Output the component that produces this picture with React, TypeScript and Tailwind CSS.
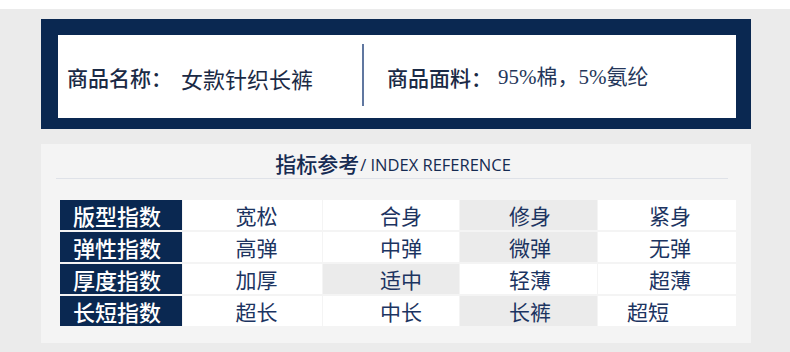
import React from "react";

const CJK = "'Noto Sans CJK SC', 'Noto Sans', sans-serif";

type Cell = { t: string; hi?: boolean; left?: boolean };

const rows: { label: string; cells: Cell[] }[] = [
  { label: "版型指数", cells: [{ t: "宽松" }, { t: "合身" }, { t: "修身", hi: true }, { t: "紧身" }] },
  { label: "弹性指数", cells: [{ t: "高弹" }, { t: "中弹" }, { t: "微弹", hi: true }, { t: "无弹" }] },
  { label: "厚度指数", cells: [{ t: "加厚" }, { t: "适中", hi: true }, { t: "轻薄" }, { t: "超薄" }] },
  { label: "长短指数", cells: [{ t: "超长" }, { t: "中长" }, { t: "长裤", hi: true }, { t: "超短", left: true }] },
];

const colPad = ["pl-[8px]", "pl-[20px]", "pl-[3px]", "pl-[6px]"];

export default function App() {
  return (
    <div
      className="w-[790px] h-[352px] bg-[#ebebeb] overflow-hidden"
      style={{ fontFamily: CJK }}
    >
      <div className="h-[9px] bg-white" />
      {/* product info box */}
      <div className="ml-[41px] mt-[10px] w-[710px] bg-[#0a2851] pt-[16px] pl-[17px] pr-[15px] pb-[11px]">
        <div className="h-[83px] bg-white flex items-start">
          <div className="w-[304px] h-full flex items-center pl-[9px] pt-[3px] text-[21px] text-[#1b2a45]">
            <span className="font-medium">商品名称：</span>
            <span className="ml-[9px] text-[22px]">女款针织长裤</span>
          </div>
          <div className="w-[2px] h-[62px] mt-[9px] bg-[#6077a0]" />
          <div className="flex-1 h-full flex items-center pl-[23px] pt-[3px] text-[21px] text-[#1b2a45]">
            <span className="font-medium">商品面料：</span>
            <span
              className="ml-[6px] text-[21px] text-[#24365a]"
              style={{ fontFamily: "'Liberation Serif', 'Noto Sans CJK SC', serif" }}
            >
              95%棉，5%氨纶
            </span>
          </div>
        </div>
      </div>

      {/* index panel */}
      <div className="ml-[41px] mt-[15px] w-[710px] h-[199px] bg-[#f4f4f4] pt-[6px]">
        <div className="flex items-end justify-center h-[27px] pr-[6px]">
          <span className="text-[21px] leading-[27px] font-medium text-[#162b52]">指标参考</span>
          <span
            className="text-[16.5px] leading-[25px] text-[#162b52] ml-[1px]"
            style={{ fontFamily: "'Open Sans', 'Noto Sans', sans-serif" }}
          >
            / INDEX REFERENCE
          </span>
        </div>
        <div className="ml-[15px] mt-[1px] w-[672px] h-[1px] bg-[#dfe2e8]" />
        <div className="ml-[19px] mt-[21px] grid grid-cols-[122px_139px_136px_137px_138px] gap-x-[1px] gap-y-[2px]">
          {rows.map((r) => (
            <React.Fragment key={r.label}>
              <div className="h-[30px] bg-[#0a2851] text-white text-[22px] font-medium flex items-center justify-center pr-[8px] leading-none">
                {r.label}
              </div>
              {r.cells.map((c, i) => (
                <div
                  key={i}
                  className={
                    "h-[30px] flex items-center text-[21px] leading-none text-[#1c3461] " +
                    (c.hi ? "bg-[#ebebeb] " : "bg-white ") +
                    (c.left ? "justify-start pl-[29px]" : "justify-center " + colPad[i])
                  }
                >
                  {c.t}
                </div>
              ))}
            </React.Fragment>
          ))}
        </div>
      </div>
    </div>
  );
}
